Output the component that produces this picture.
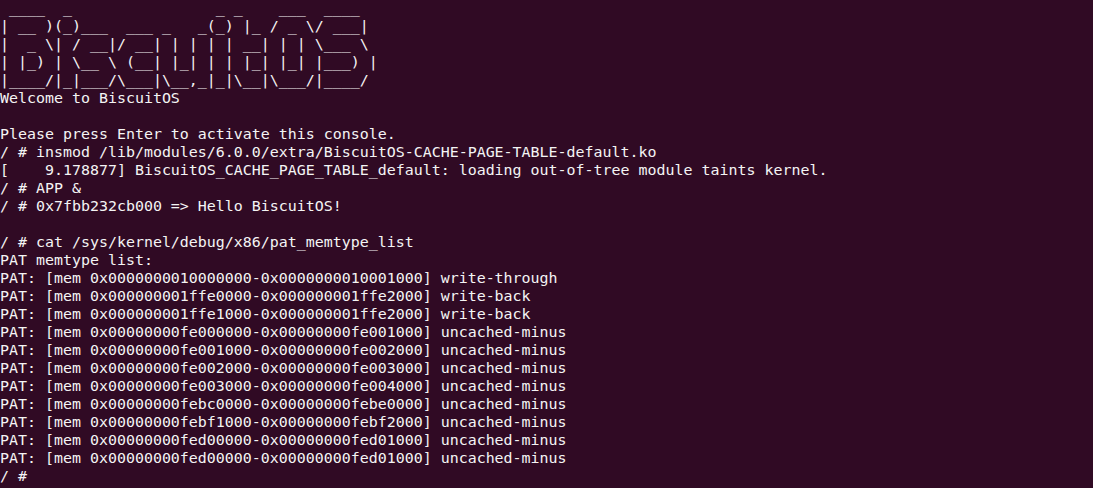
import React from "react";

const lines: string[] = [
  " ____  _                _ _    ___  ____  ",
  "| __ )(_)___  ___ _   _(_) |_ / _ \\/ ___| ",
  "|  _ \\| / __|/ __| | | | | __| | | \\___ \\ ",
  "| |_) | \\__ \\ (__| |_| | | |_| |_| |___) |",
  "|____/|_|___/\\___|\\__,_|_|\\__|\\___/|____/ ",
  "Welcome to BiscuitOS",
  "",
  "Please press Enter to activate this console.",
  "/ # insmod /lib/modules/6.0.0/extra/BiscuitOS-CACHE-PAGE-TABLE-default.ko",
  "[    9.178877] BiscuitOS_CACHE_PAGE_TABLE_default: loading out-of-tree module taints kernel.",
  "/ # APP &",
  "/ # 0x7fbb232cb000 => Hello BiscuitOS!",
  "",
  "/ # cat /sys/kernel/debug/x86/pat_memtype_list",
  "PAT memtype list:",
  "PAT: [mem 0x0000000010000000-0x0000000010001000] write-through",
  "PAT: [mem 0x000000001ffe0000-0x000000001ffe2000] write-back",
  "PAT: [mem 0x000000001ffe1000-0x000000001ffe2000] write-back",
  "PAT: [mem 0x00000000fe000000-0x00000000fe001000] uncached-minus",
  "PAT: [mem 0x00000000fe001000-0x00000000fe002000] uncached-minus",
  "PAT: [mem 0x00000000fe002000-0x00000000fe003000] uncached-minus",
  "PAT: [mem 0x00000000fe003000-0x00000000fe004000] uncached-minus",
  "PAT: [mem 0x00000000febc0000-0x00000000febe0000] uncached-minus",
  "PAT: [mem 0x00000000febf1000-0x00000000febf2000] uncached-minus",
  "PAT: [mem 0x00000000fed00000-0x00000000fed01000] uncached-minus",
  "PAT: [mem 0x00000000fed00000-0x00000000fed01000] uncached-minus",
  "/ #",
];

export default function App() {
  return (
    <div className="w-[1093px] h-[488px] overflow-hidden bg-[#300a24]">
      <div
        className="mt-[-1px] text-[#f4f4f4] text-[14.95px] leading-[18px] whitespace-pre"
        style={{ fontFamily: '"DejaVu Sans Mono", monospace' }}
      >
        {lines.map((l, i) => (
          <div key={i} className="h-[18px]">
            {l}
          </div>
        ))}
      </div>
    </div>
  );
}
